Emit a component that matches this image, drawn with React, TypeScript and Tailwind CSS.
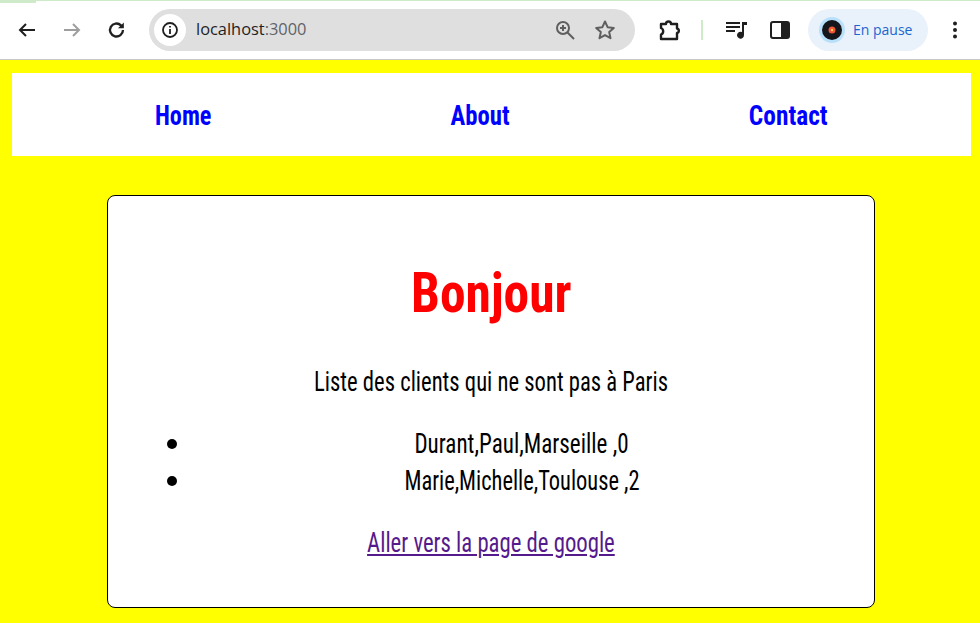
import React from "react";

const F = "[font-family:'Roboto_Condensed','Liberation_Sans_Narrow','Liberation_Sans',sans-serif]";

function Chrome() {
  return (
    <div className="relative flex h-[60px] items-center border-b border-[#c8c8c8] bg-white">
      <div className="absolute left-0 top-0 h-[3px] w-[36px] bg-[#cfeac8]" />
      <div className="absolute left-[36px] right-0 top-0 h-[1px] bg-[#cfeac8]" />
      <div className="flex h-[42px] w-[149px] items-center pl-[17px]">
        <svg width="20" height="20" viewBox="0 0 20 20" fill="none" stroke="#1f1f1f" strokeWidth="2"><path d="M18 10H3M9 4l-6 6 6 6" /></svg>
        <svg className="ml-[25px]" width="20" height="20" viewBox="0 0 20 20" fill="none" stroke="#9e9e9e" strokeWidth="2"><path d="M2 10h15M11 4l6 6-6 6" /></svg>
        <svg className="ml-[25px]" width="20" height="20" viewBox="0 0 20 20" fill="none" stroke="#1f1f1f" strokeWidth="2.300"><path d="M16 10a6.500 6.500 0 1 1-2-4.700L16 7" /><path d="M16.800 2.500V8.300H11" fill="#1f1f1f" stroke="none" /></svg>
      </div>
      <div className="flex h-[42px] w-[486px] items-center rounded-full bg-[#dfdfdf] pl-[5px]">
        <div className="flex h-[32px] w-[32px] items-center justify-center rounded-full bg-white">
          <svg width="18" height="18" viewBox="0 0 18 18" fill="none" stroke="#1f1f1f" strokeWidth="1.800"><circle cx="9" cy="9" r="7" /><path d="M9 8v5M9 5v1.600" /></svg>
        </div>
        <span className="ml-[10px] font-['Open_Sans',sans-serif] text-[16.4px] text-[#1f1f1f]">localhost<span className="text-[#5f6368]">:3000</span></span>
        <svg className="ml-auto" width="22" height="22" viewBox="0 0 22 22" fill="none" stroke="#5f5f5f" strokeWidth="2"><circle cx="9" cy="9" r="6" /><path d="M13.500 13.500L20 20M6 9h6M9 6v6" /></svg>
        <svg className="ml-[18px] mr-[19px]" width="22" height="22" viewBox="0 0 22 22" fill="none" stroke="#5f5f5f" strokeWidth="2" strokeLinejoin="round"><path d="M11 2.500l2.600 5.700 6.200.7-4.600 4.200 1.300 6.100L11 16.100l-5.500 3.100 1.300-6.100-4.600-4.200 6.200-.7z" /></svg>
      </div>
      <svg className="ml-[22px]" width="24" height="24" viewBox="0 0 24 24" fill="none" stroke="#1f1f1f" strokeWidth="2.400" strokeLinejoin="round"><path d="M4 6h5a2.500 2.500 0 0 1 5 0h6v4.500a2.300 2.300 0 0 1 0 4.500V21H4v-4.500a3.500 3.500 0 0 0 0-6.500z" /></svg>
      <div className="ml-[20px] h-[20px] w-[2px] bg-[#cfeac8]" />
      <svg className="ml-[21px]" width="24" height="24" viewBox="0 0 24 24" fill="#1f1f1f"><path d="M2 4h14v2H2zM2 8h14v2H2zM2 12h9v2H2z" /><path d="M18 4h5v3h-3v10a3.500 3.500 0 1 1-2-3z" /></svg>
      <svg className="ml-[21px]" width="22" height="22" viewBox="0 0 22 22" fill="none"><rect x="2" y="3" width="18" height="16" rx="2" fill="white" stroke="#1f1f1f" strokeWidth="2" /><path d="M12 3h7a1 1 0 0 1 1 1v14a1 1 0 0 1-1 1h-7z" fill="#1f1f1f" /></svg>
      <div className="ml-[17px] flex h-[42px] w-[120px] items-center rounded-full bg-[#e9f1fb] pl-[11px]">
        <svg width="26" height="26" viewBox="0 0 26 26"><circle cx="13" cy="13" r="13" fill="#b9e0fb" /><circle cx="13" cy="13" r="10" fill="#15151c" /><circle cx="13" cy="13" r="3.500" fill="#f0553a" /><circle cx="13" cy="13" r="1.200" fill="#ffd24a" /></svg>
        <span className="ml-[8px] font-['Open_Sans',sans-serif] text-[14px] text-[#1a66d0]">En pause</span>
      </div>
      <svg className="ml-[17px]" width="20" height="20" viewBox="0 0 20 20" fill="#1f1f1f"><circle cx="10" cy="3.500" r="2" /><circle cx="10" cy="10" r="2" /><circle cx="10" cy="16.500" r="2" /></svg>
    </div>
  );
}

function Client({ text, scale }: { text: string; scale: string }) {
  return (
    <li className="flex items-center gap-[11px]">
      <span className="h-[10px] w-[10px] shrink-0 rounded-full bg-black" />
      <span className="flex-1 text-center"><span className={`inline-block ${scale}`}>{text}</span></span>
    </li>
  );
}

export default function App() {
  return (
    <div className="h-[623px] overflow-hidden bg-[#ffff00]">
      <Chrome />
      <div className={`pl-[12px] pt-[13px] ${F}`}>
        <nav className="flex h-[83px] w-[959px] items-center justify-between bg-white px-[143px] pt-[4px] text-[28.5px] font-bold text-[#0000ff]">
          <a className="flex w-[57px] justify-center"><span className="inline-block scale-x-[0.85]">Home</span></a>
          <a className="flex w-[59px] justify-center"><span className="inline-block scale-x-[0.867]">About</span></a>
          <a className="flex w-[79px] justify-center"><span className="inline-block scale-x-[0.89]">Contact</span></a>
        </nav>
        <main className="ml-[95px] mt-[39px] flex h-[413px] w-[768px] flex-col items-center rounded-[8px] border border-black bg-white px-[18px] text-black">
          <h1 className="mt-[62px] whitespace-nowrap text-[56px] font-bold leading-[70px] text-[#ff0000]"><span className="inline-block scale-x-[0.92]">Bonjour</span></h1>
          <p className="mt-[35px] whitespace-nowrap text-[27.5px] leading-[37px]"><span className="inline-block scale-x-[0.823]">Liste des clients qui ne sont pas à Paris</span></p>
          <ul className="mt-[25px] w-full list-none pl-[41px] text-[27.5px] leading-[37px]">
            <Client text="Durant,Paul,Marseille ,0" scale="scale-x-[0.84]" />
            <Client text="Marie,Michelle,Toulouse ,2" scale="scale-x-[0.816]" />
          </ul>
          <a className="mt-[25px] whitespace-nowrap text-[27.5px] leading-[37px] text-[#551a8b]"><span className="inline-block scale-x-[0.826] underline">Aller vers la page de google</span></a>
        </main>
      </div>
    </div>
  );
}
